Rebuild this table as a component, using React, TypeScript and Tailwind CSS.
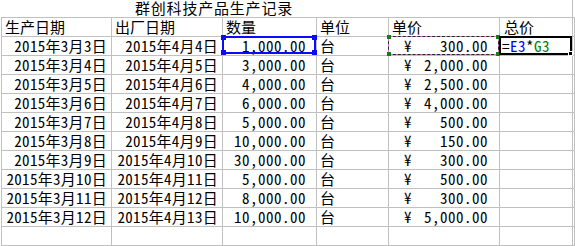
import React from "react";

interface Row {
  made: string;
  out: string;
  qty: string;
  price: string;
}

const rows: Row[] = [
  { made: "2015年3月3日", out: "2015年4月4日", qty: "1,000.00", price: "300.00" },
  { made: "2015年3月4日", out: "2015年4月5日", qty: "3,000.00", price: "2,000.00" },
  { made: "2015年3月5日", out: "2015年4月6日", qty: "4,000.00", price: "2,500.00" },
  { made: "2015年3月6日", out: "2015年4月7日", qty: "6,000.00", price: "4,000.00" },
  { made: "2015年3月7日", out: "2015年4月8日", qty: "5,000.00", price: "500.00" },
  { made: "2015年3月8日", out: "2015年4月9日", qty: "10,000.00", price: "150.00" },
  { made: "2015年3月9日", out: "2015年4月10日", qty: "30,000.00", price: "300.00" },
  { made: "2015年3月10日", out: "2015年4月11日", qty: "5,000.00", price: "500.00" },
  { made: "2015年3月11日", out: "2015年4月12日", qty: "8,000.00", price: "300.00" },
  { made: "2015年3月12日", out: "2015年4月13日", qty: "10,000.00", price: "5,000.00" },
];

const cell = "relative h-[19px] border-r border-b border-[#c0c0c0] flex items-end leading-[18px] whitespace-nowrap";
// half-width glyphs 8px apart, as in the sheet
const num = "tracking-[0.5px]";

function Handle({ pos, color }: { pos: string; color: string }) {
  return <span className={`absolute ${pos} ${color}`} />;
}

export default function App() {
  return (
    <div className="w-[575px] h-[246px] overflow-hidden bg-white text-black text-[15px] font-['Noto_Sans_Mono_CJK_SC','Noto_Sans_CJK_SC',monospace]">
      {/* title row */}
      <div className="flex h-[17px]">
        <div className="w-[572px] pl-[135px] tracking-[0.8px] leading-[16px]">群创科技产品生产记录</div>
        <div className="border-l border-[#c0c0c0]" />
      </div>

      {/* sheet */}
      <div className="pl-px">
        <div className="grid grid-cols-[110px_111px_94px_72px_111px_73px_1fr] border-l border-t border-[#c0c0c0]">
          <div className={`${cell} pl-[3px]`}>生产日期</div>
          <div className={`${cell} pl-[3px]`}>出厂日期</div>
          <div className={`${cell} pl-[3px]`}>数量</div>
          <div className={`${cell} pl-[3px]`}>单位</div>
          <div className={`${cell} pl-[3px]`}>单价</div>
          <div className={`${cell} pl-[4px]`}>总价</div>
          <div className={cell} />

          {rows.map((r, i) => (
            <React.Fragment key={i}>
              <div className={`${cell} justify-end pr-[4px] tracking-[0.3px]`}>{r.made}</div>
              <div className={`${cell} justify-end pr-[4px] tracking-[0.3px]`}>{r.out}</div>
              <div className={`${cell} justify-end pr-[10px] ${num}`}>
                {r.qty}
                {i === 0 && (
                  <div className="absolute -left-px -top-px right-0 bottom-px border-2 border-[#0a0aff]">
                    <Handle pos="-left-[3px] -top-[3px] w-[5px] h-[5px]" color="bg-[#0a0aff]" />
                    <Handle pos="-right-[3px] -top-[3px] w-[5px] h-[5px]" color="bg-[#0a0aff]" />
                    <Handle pos="-left-[3px] -bottom-[3px] w-[5px] h-[5px]" color="bg-[#0a0aff]" />
                    <Handle pos="-right-[3px] -bottom-[3px] w-[5px] h-[5px]" color="bg-[#0a0aff]" />
                  </div>
                )}
              </div>
              <div className={`${cell} pl-[3px]`}>台</div>
              <div className={`${cell} justify-between pl-[15px] pr-[11px] ${num}`}>
                <span>¥</span>
                <span>{r.price}</span>
                {i === 0 && (
                  <>
                    <div className="absolute -left-px -top-px right-0 bottom-0 border border-[#e07ce0]" />
                    <div className="absolute -left-px -top-px right-0 bottom-0 border border-dashed border-[#1c2e1c]">
                      <Handle pos="-left-[2px] -top-[2px] w-[4px] h-[4px]" color="bg-[#108010]" />
                      <Handle pos="-right-[2px] -top-[2px] w-[4px] h-[4px]" color="bg-[#108010]" />
                      <Handle pos="-left-[2px] -bottom-[2px] w-[4px] h-[4px]" color="bg-[#108010]" />
                      <Handle pos="-right-[2px] -bottom-[2px] w-[4px] h-[4px]" color="bg-[#108010]" />
                    </div>
                  </>
                )}
              </div>
              <div className={`${cell} pl-[2px] ${num}`}>
                {i === 0 && (
                  <>
                    <span>=</span>
                    <span className="text-[#0000ff]">E3</span>
                    <span>*</span>
                    <span className="text-[#008000]">G3</span>
                    <div className="absolute -left-px -top-px right-0 bottom-0 border-2 border-black">
                      <span className="absolute -right-[3px] -bottom-[3px] w-[5px] h-[5px] bg-black border border-white" />
                    </div>
                  </>
                )}
              </div>
              <div className={cell} />
            </React.Fragment>
          ))}

          {[0, 1, 2, 3, 4, 5, 6].map((c) => (
            <div key={c} className={cell} />
          ))}
        </div>
      </div>
    </div>
  );
}
